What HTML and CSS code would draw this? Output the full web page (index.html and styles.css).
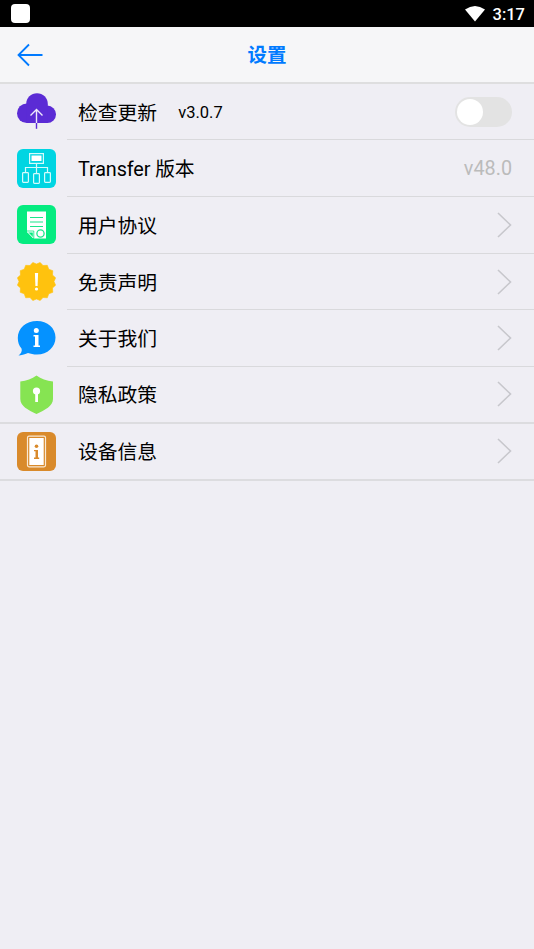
FILE: index.html
```html
<!DOCTYPE html>
<html lang="zh-CN">
<head>
<meta charset="utf-8">
<title>设置</title>
<link rel="stylesheet" href="styles.css">
</head>
<body>
<div class="status">
  <span class="notice"></span>
  <svg class="wifi" width="20" height="16" viewBox="0 0 20 16"><path d="M0 3.500Q10-3.500 20 3.500L10 15.500Z" fill="#fff"/></svg>
  <span class="clock">3:17</span>
</div>
<header class="header">
  <svg class="back" width="26" height="24" viewBox="0 0 26 24"><path d="M25.500 12H1.500M12 1.500L1.500 12L12 22.500" fill="none" stroke="#007aff" stroke-width="1.800"/></svg>
  <h1>设置</h1>
</header>
<main class="list">
  <div class="row">
    <svg class="icon" viewBox="0 0 39 39"><g fill="#5b2bd5"><circle cx="20" cy="12" r="10.800"/><circle cx="9.800" cy="21.200" r="9.800"/><circle cx="30.300" cy="22.300" r="8.700"/><path d="M9.800 12H30.300V31H9.800Z"/></g><path d="M19.500 31V17.500M13.500 23.500L19.500 17.500L25.500 23.500" fill="none" stroke="#eee9fb" stroke-width="1.400"/><path d="M19.500 31V36.800" stroke="#5b2bd5" stroke-width="1.400"/></svg>
    <div class="body"><span>检查更新</span><span class="small">v3.0.7</span><span class="switch"></span></div>
  </div>
  <div class="row">
    <svg class="icon" viewBox="0 0 39 39"><rect width="39" height="39" rx="6" fill="#00d5e2"/><g fill="none" stroke="#d5fbfc" stroke-width="1.200"><rect x="12.600" y="4.600" width="13.800" height="9.800"/><path d="M19.500 14.500V24M8.500 23.500V18.500H30.500V23.500"/><rect x="5.600" y="23.600" width="5.800" height="9.800" rx=".8"/><rect x="16.600" y="24.600" width="5.800" height="9.800" rx=".8"/><rect x="27.600" y="23.600" width="5.800" height="9.800" rx=".8"/></g><path d="M14.500 6.500H24.500V12H14.500Z" fill="#fff"/></svg>
    <div class="body"><span class="latin">Transfer 版本</span><span class="value">v48.0</span></div>
  </div>
  <div class="row">
    <svg class="icon" viewBox="0 0 39 39"><rect width="39" height="39" rx="6" fill="#05eb80"/><path d="M10 6.500H29V33.500H17L10 26.500Z" fill="#fff"/><path d="M13 12.500H26M13 17H26M13 21.500H26" stroke="#1ce68b" stroke-width="1.200"/><path d="M10.500 27H16.300V33Z" fill="#05eb80" stroke="#fff" stroke-width="1"/><path d="M16.800 26V33.500M10 26H16.800" fill="none" stroke="#05eb80" stroke-width=".8"/><circle cx="23.500" cy="28.500" r="3.600" fill="#fff" stroke="#1ce68b" stroke-width="1.300"/></svg>
    <div class="body"><span>用户协议</span><svg class="chev" viewBox="0 0 15 26"><path d="M1 1L13.500 13L1 25"/></svg></div>
  </div>
  <div class="row">
    <svg class="icon" viewBox="0 0 39 39"><path d="M19.500 2L23.200.5L26 3.500L30.300 3.300L31.800 7.200L35.800 8.700L35.500 13L38.600 15.800L37 19.500L38.600 23.200L35.500 26L35.800 30.300L31.800 31.800L30.300 35.800L26 35.500L23.200 38.500L19.500 37L15.800 38.500L13 35.500L8.700 35.800L7.200 31.800L3.200 30.300L3.500 26L.4 23.200L2 19.500L.4 15.800L3.500 13L3.200 8.700L7.200 7.200L8.700 3.300L13 3.500L15.800.5Z" fill="#ffc20e" stroke="#ffc20e" stroke-width=".6" stroke-linejoin="round"/><path d="M17.900 11H21.100L20.600 24H18.400Z" fill="#fff"/><circle cx="19.500" cy="27" r="1.600" fill="#fff"/></svg>
    <div class="body"><span>免责声明</span><svg class="chev" viewBox="0 0 15 26"><path d="M1 1L13.500 13L1 25"/></svg></div>
  </div>
  <div class="row">
    <svg class="icon" viewBox="0 0 39 39"><path d="M20 2C30.500 2 38.500 9 38.500 18.500S30.500 35.500 20 35.500C16.500 35.500 13.500 34.800 11 34C7.500 35.500 4 36.500 1.500 36.500C4 34.500 5.500 32 4.500 29.500C2 26.500.8 23 .8 19C.8 9 9 2 20 2Z" fill="#0592ff"/><circle cx="19.300" cy="11.500" r="2.500" fill="#fff"/><path d="M16.500 16H21.500V26.500H23V28H16.500V26.500H18V17.500H16.500Z" fill="#fff"/></svg>
    <div class="body"><span>关于我们</span><svg class="chev" viewBox="0 0 15 26"><path d="M1 1L13.500 13L1 25"/></svg></div>
  </div>
  <div class="row last">
    <svg class="icon" viewBox="0 0 39 39"><path d="M19.500.5C24 3.500 29.500 6 36 6.500V24C36 31 28 35 19.500 39C11 35 3.300 31 3.300 24V6.500C9.500 6 15 3.500 19.500.5Z" fill="#86e452"/><circle cx="19.500" cy="16" r="3.600" fill="#fff"/><path d="M18.200 18H21V27H18.200Z" fill="#fff"/></svg>
    <div class="body"><span>隐私政策</span><svg class="chev" viewBox="0 0 15 26"><path d="M1 1L13.500 13L1 25"/></svg></div>
  </div>
  <div class="row last">
    <svg class="icon" viewBox="0 0 39 39"><rect width="39" height="39" rx="6" fill="#d98a2b"/><rect x="10.500" y="4.200" width="18" height="30.600" rx="1.500" fill="none" stroke="#fae9d3" stroke-width="1.200"/><rect x="12.300" y="6" width="14.400" height="27" fill="#fff"/><circle cx="19.500" cy="14.300" r="1.800" fill="#d98a2b"/><path d="M17 18H21V25.500H22.200V27H17V25.500H18.500V19.200H17Z" fill="#d98a2b"/></svg>
    <div class="body"><span>设备信息</span><svg class="chev" viewBox="0 0 15 26"><path d="M1 1L13.500 13L1 25"/></svg></div>
  </div>
</main>
</body>
</html>
```

FILE: styles.css
```css
* { box-sizing: border-box; }
body {
  margin: 0;
  min-height: 949px;
  background: #efeef4;
  color: #000;
  font-family: Roboto, "Noto Sans CJK SC", sans-serif;
}
.status {
  display: flex;
  align-items: center;
  height: 27px;
  padding: 0 9px 0 10.5px;
  background: #000;
  color: #fff;
}
.notice {
  width: 19.5px;
  height: 19px;
  border-radius: 4px;
  background: #fff;
}
.wifi { margin: 0 8px 0 auto; }
.clock {
  font-size: 16.5px;
  font-weight: 500;
  line-height: 27px;
  padding-top: 2px;
}
.header {
  display: grid;
  grid-template-columns: 1fr auto 1fr;
  align-items: center;
  height: 56.7px;
  padding: 0 17px;
  background: #f6f6f8;
  border-bottom: 2px solid #dededf;
}
.back { margin-top: 1px; }
.header h1 {
  margin: 0;
  padding-top: 4px;
  color: #007aff;
  font-size: 19.5px;
  font-weight: 700;
  line-height: 28px;
}
.list { display: flex; flex-direction: column; }
.row {
  display: flex;
  align-items: center;
  height: 56.7px;
  padding-left: 17px;
}
.row:not(.last) .icon { margin-bottom: 1px; }
.icon {
  flex: none;
  width: 39px;
  height: 39px;
}
.row:first-child .icon { margin-bottom: 2px; overflow: visible; }
.body {
  flex: 1;
  display: flex;
  align-items: center;
  align-self: stretch;
  margin-left: 11px;
  padding: 0 22px 0 11px;
  border-bottom: 1.5px solid #d9d9dc;
  font-size: 19.8px;
}
.body > span:first-child { padding-bottom: 1px; }
.latin { letter-spacing: -0.1px; }
.last { border-bottom: 2px solid #dcdcdf; }
.last .body { border-bottom: 0; }
.small { margin-left: 21px; padding-top: 1px; font-size: 16.5px; }
.value { margin-left: auto; padding-top: 1px; color: #bbb; }
.switch {
  width: 57px;
  height: 30px;
  margin-left: auto;
  padding: 2px;
  border-radius: 15px;
  background: #e3e3e3;
}
.switch::before {
  content: "";
  display: block;
  width: 26px;
  height: 26px;
  border-radius: 50%;
  background: #fff;
}
.chev {
  width: 15px;
  height: 26px;
  margin-left: auto;
  fill: none;
  stroke: #c7c7cc;
  stroke-width: 1.6;
}
```
